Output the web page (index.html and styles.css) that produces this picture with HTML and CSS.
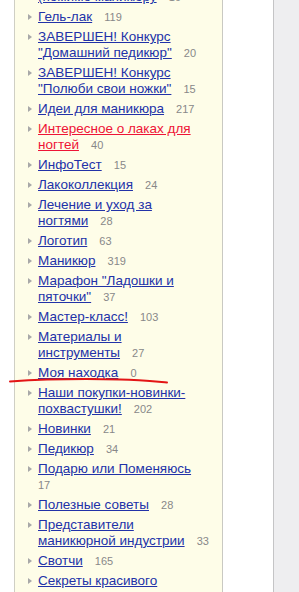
FILE: index.html
```html
<!DOCTYPE html>
<html lang="ru">
<head>
<meta charset="utf-8">
<title>Рубрики</title>
<link rel="stylesheet" href="styles.css">
</head>
<body>
<div class="page">
  <div class="gutter"></div>
  <div class="panel">
    <ul class="cats">
      <li class="item"><span class="bullet"></span><div class="txt"><a href="#">Всё для ногтей</a><br><a href="#">(помимо маникюру</a><span class="count"> 16</span></div></li>
      <li class="item"><span class="bullet"></span><div class="txt"><a href="#">Гель-лак</a><span class="count"> 119</span></div></li>
      <li class="item"><span class="bullet"></span><div class="txt"><a href="#">ЗАВЕРШЕН! Конкурс "Домашний педикюр"</a><span class="count"> 20</span></div></li>
      <li class="item"><span class="bullet"></span><div class="txt"><a href="#">ЗАВЕРШЕН! Конкурс "Полюби свои ножки"</a><span class="count"> 15</span></div></li>
      <li class="item"><span class="bullet"></span><div class="txt"><a href="#">Идеи для маникюра</a><span class="count"> 217</span></div></li>
      <li class="item"><span class="bullet"></span><div class="txt"><a href="#" class="hot">Интересное о лаках для ногтей</a><span class="count"> 40</span></div></li>
      <li class="item"><span class="bullet"></span><div class="txt"><a href="#">ИнфоТест</a><span class="count"> 15</span></div></li>
      <li class="item"><span class="bullet"></span><div class="txt"><a href="#">Лакоколлекция</a><span class="count"> 24</span></div></li>
      <li class="item"><span class="bullet"></span><div class="txt"><a href="#">Лечение и уход за<br>ногтями</a><span class="count"> 28</span></div></li>
      <li class="item"><span class="bullet"></span><div class="txt"><a href="#">Логотип</a><span class="count"> 63</span></div></li>
      <li class="item"><span class="bullet"></span><div class="txt"><a href="#">Маникюр</a><span class="count"> 319</span></div></li>
      <li class="item"><span class="bullet"></span><div class="txt"><a href="#">Марафон "Ладошки и пяточки"</a><span class="count"> 37</span></div></li>
      <li class="item"><span class="bullet"></span><div class="txt"><a href="#">Мастер-класс!</a><span class="count"> 103</span></div></li>
      <li class="item"><span class="bullet"></span><div class="txt"><a href="#">Материалы и<br>инструменты</a><span class="count"> 27</span></div></li>
      <li class="item"><span class="bullet"></span><div class="txt"><a href="#">Моя находка</a><span class="count"> 0</span></div></li>
      <li class="item"><span class="bullet"></span><div class="txt"><a href="#">Наши покупки-новинки-похвастушки!</a><span class="count"> 202</span></div></li>
      <li class="item"><span class="bullet"></span><div class="txt"><a href="#">Новинки</a><span class="count"> 21</span></div></li>
      <li class="item"><span class="bullet"></span><div class="txt"><a href="#">Педикюр</a><span class="count"> 34</span></div></li>
      <li class="item"><span class="bullet"></span><div class="txt"><a href="#">Подарю или Поменяюсь</a><span class="count"> 17</span></div></li>
      <li class="item"><span class="bullet"></span><div class="txt"><a href="#">Полезные советы</a><span class="count"> 28</span></div></li>
      <li class="item"><span class="bullet"></span><div class="txt"><a href="#">Представители маникюрной индустрии</a><span class="count"> 33</span></div></li>
      <li class="item"><span class="bullet"></span><div class="txt"><a href="#">Свотчи</a><span class="count"> 165</span></div></li>
      <li class="item"><span class="bullet"></span><div class="txt"><a href="#">Секреты красивого маникюра</a><span class="count"> 51</span></div></li>
    </ul>
  </div>
  <div class="blank"></div>
  <div class="side"></div>
  <svg class="scribble" width="299" height="592" viewBox="0 0 299 592" aria-hidden="true">
    <path d="M10 381.5 C 40 379.5, 80 378.5, 120 379.5 C 140 380, 155 381.5, 167 382.5" fill="none" stroke="#e31515" stroke-width="2" stroke-linecap="round"/>
  </svg>
</div>
</body>
</html>
```

FILE: styles.css
```css
html, body {
  margin: 0;
  padding: 0;
  height: 100%;
  overflow: hidden;
  background: #ffffff;
}

.page {
  position: relative;
  display: flex;
  height: 592px;
  width: 299px;
  overflow: hidden;
  font-family: "Liberation Sans", Arial, sans-serif;
}

.gutter {
  width: 14px;
  flex: none;
  background: #ffffff;
}

.panel {
  width: 207px;
  flex: none;
  background: #fefde8;
  border-left: 1px solid #cfcfc4;
  border-right: 1px solid #c9c9c2;
}

.blank {
  width: 50px;
  flex: none;
  background: #ffffff;
}

.side {
  flex: 1;
  background: #eeeef0;
  border-left: 1px solid #c4c4c6;
}

.cats {
  list-style: none;
  margin: -27px 0 0 0;
  padding: 0 10px 0 13px;
}

.item {
  display: flex;
  align-items: flex-start;
  gap: 6px;
  margin: 0 0 4px 0;
}

.bullet {
  flex: none;
  width: 0;
  height: 0;
  margin-top: 5px;
  border-left: 4px solid #a8a8a8;
  border-top: 3px solid transparent;
  border-bottom: 3px solid transparent;
}

.txt {
  flex: 1;
  font-size: 13.5px;
  line-height: 16px;
}

.txt a {
  color: #2232a8;
  text-decoration: underline;
}

.txt a.hot {
  color: #ee1436;
}

.count {
  font-size: 11px;
  color: #888888;
  word-spacing: 9px;
}

.scribble {
  position: absolute;
  left: 0;
  top: 0;
  pointer-events: none;
}
```
